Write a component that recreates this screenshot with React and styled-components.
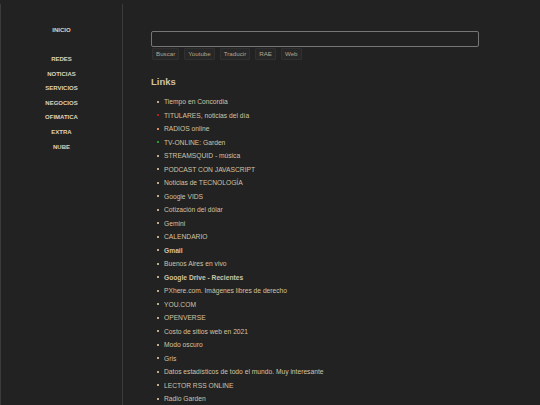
import React from "react";
import styled, { createGlobalStyle } from "styled-components";

const GlobalStyle = createGlobalStyle`
  html, body {
    margin: 0;
    padding: 0;
    background: #222222;
    font-family: "Liberation Sans", Arial, sans-serif;
    color: #d3c2a2;
    overflow: hidden;
  }
`;

const Page = styled.div`
  display: flex;
  align-items: flex-start;
  min-height: 405px;
  padding-top: 4px;
`;

const Sidebar = styled.nav`
  width: 121px;
  min-height: 420px;
  border-left: 1px solid #3c3c3c;
  border-right: 1px solid #3c3c3c;
  display: flex;
  flex-direction: column;
  align-items: center;
  padding-top: 22px;
`;

const NavLink = styled.a`
  font-size: 6px;
  font-weight: bold;
  line-height: 8px;
  color: #e0d3ba;
  text-decoration: none;
  margin-bottom: ${({ $gap }) => $gap || 6.6}px;
`;

const Main = styled.main`
  flex: 1;
  padding: 27px 0 0 28px;
`;

const SearchInput = styled.input`
  display: block;
  box-sizing: border-box;
  width: 328px;
  height: 16px;
  margin: 0;
  background: #222222;
  border: 1px solid #767676;
  border-radius: 2px;
  outline: none;
`;

const ButtonRow = styled.div`
  display: flex;
  gap: 5px;
  margin-top: 1px;
  padding-left: 1px;
`;

const SearchButton = styled.button`
  box-sizing: border-box;
  height: 12px;
  padding: 0 3px;
  font-family: "Liberation Sans", Arial, sans-serif;
  font-size: 6.2px;
  line-height: 10px;
  color: #b3a68f;
  background: #272727;
  border: 1px solid #303030;
  border-radius: 1px;
`;

const Heading = styled.h2`
  margin: 16px 0 0;
  font-size: 9.5px;
  line-height: 11px;
  font-weight: bold;
  color: #d3c2a2;
`;

const List = styled.ul`
  list-style: none;
  margin: 8px 0 0;
  padding: 0 0 0 6px;
`;

const Item = styled.li`
  display: flex;
  align-items: center;
  height: 13.5px;
  font-size: 6.7px;
  font-weight: ${({ $bold }) => ($bold ? "bold" : "normal")};
  color: #d3c2a2;

  &::before {
    content: "";
    width: 2px;
    height: 2px;
    margin-right: 5px;
    background: ${({ $dot }) => $dot || "#bcac8e"};
  }
`;

const nav = [
  { label: "INICIO", gap: 21 },
  { label: "REDES" },
  { label: "NOTICIAS" },
  { label: "SERVICIOS" },
  { label: "NEGOCIOS" },
  { label: "OFIMATICA" },
  { label: "EXTRA" },
  { label: "NUBE" },
];

const buttons = ["Buscar", "Youtube", "Traducir", "RAE", "Web"];

const links = [
  { text: "Tiempo en Concordia" },
  { text: "TITULARES, noticias del día", dot: "#a82222" },
  { text: "RADIOS online", dot: "#e08a5a" },
  { text: "TV-ONLINE: Garden", dot: "#2f9a2f" },
  { text: "STREAMSQUID - música" },
  { text: "PODCAST CON JAVASCRIPT" },
  { text: "Noticias de TECNOLOGÍA" },
  { text: "Google VIDS" },
  { text: "Cotización del dólar" },
  { text: "Gemini" },
  { text: "CALENDARIO" },
  { text: "Gmail", bold: true },
  { text: "Buenos Aires en vivo" },
  { text: "Google Drive - Recientes", bold: true },
  { text: "PXhere.com. Imágenes libres de derecho" },
  { text: "YOU.COM" },
  { text: "OPENVERSE" },
  { text: "Costo de sitios web en 2021" },
  { text: "Modo oscuro" },
  { text: "Gris" },
  { text: "Datos estadísticos de todo el mundo. Muy interesante" },
  { text: "LECTOR RSS ONLINE" },
  { text: "Radio Garden" },
];

const App = () => {
  return (
    <>
      <GlobalStyle />
      <Page>
        <Sidebar>
          {nav.map((n) => (
            <NavLink key={n.label} href="#" $gap={n.gap}>
              {n.label}
            </NavLink>
          ))}
        </Sidebar>
        <Main>
          <SearchInput type="text" />
          <ButtonRow>
            {buttons.map((b) => (
              <SearchButton key={b}>{b}</SearchButton>
            ))}
          </ButtonRow>
          <Heading>Links</Heading>
          <List>
            {links.map((l) => (
              <Item key={l.text} $dot={l.dot} $bold={l.bold}>
                {l.text}
              </Item>
            ))}
          </List>
        </Main>
      </Page>
    </>
  );
};

export default App;
